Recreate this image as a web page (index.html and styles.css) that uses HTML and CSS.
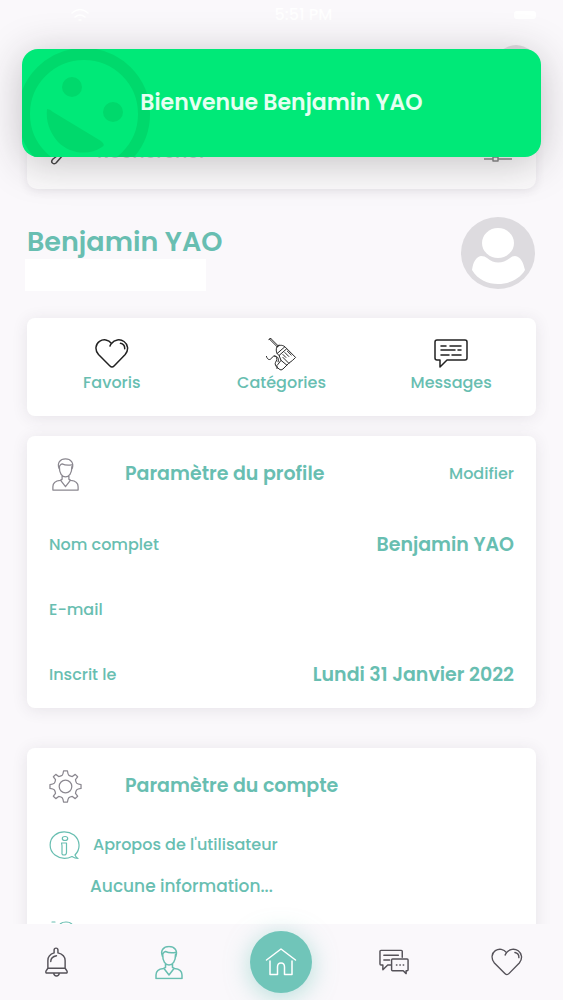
FILE: index.html
```html
<!DOCTYPE html>
<html lang="fr">
<head>
<meta charset="utf-8">
<meta name="viewport" content="width=device-width, initial-scale=1">
<title>Profil</title>
<link rel="stylesheet" href="styles.css">
</head>
<body>
<svg class="defs" aria-hidden="true">
  <symbol id="heart" viewBox="0 0 34 30">
    <path d="M17 28.500c-1 0-1.600-.6-2.300-1.300L3.500 16C-.5 11.500.5 5.500 4.500 2.800 8.500.2 13.500 1 16.500 5c3-4 8.500-4.800 12.500-2 4 2.800 5 8.500 1.200 13L19.300 27.200c-.7.7-1.300 1.300-2.300 1.300zM16.500 5c-.8.8-1.200 1.600-1.500 2.500M25.500 4.800c2.800.6 4.400 2.700 4.200 5.500"/>
  </symbol>
  <symbol id="person" viewBox="0 0 28 34">
    <path d="M7.500 11C5 5 8.500 1 14 1s9 4 6.800 10M7.500 11c-.3-2 1-4.500 3-5 3 1.500 7 1.500 10 1M7.700 9c-.2 7 2.800 10.500 6.300 10.500S20.700 16 20.500 9M10.500 18.500v3.500M17.500 18.500v3.500M10.500 22l-2 1c-5 .5-7.500 2.500-7.500 6.500v3.500h26v-3.500c0-4-2.500-6-7.500-6.500l-2-1M9 23l5 6.500 5-6.500"/>
  </symbol>
</svg>

<div class="app">
  <main class="content">
    <header class="top">
      <div class="status"><svg class="status-wifi" viewBox="0 0 18 14" aria-hidden="true"><path d="M1 5q8-7 16 0M4 9q5-4 10 0M8 12h2"/></svg><span>5:51 PM</span><i class="battery"></i></div>
      <div class="account"><span class="account-dot"></span></div>
      <form class="search">
        <svg class="search-icon" viewBox="0 0 30 26" aria-hidden="true"><circle cx="19" cy="9" r="8"/><path d="M12 14l-8 6c-3 3 0 6 3 4l7-8"/></svg>
        <input type="search" placeholder="Rechercher" aria-label="Rechercher">
        <button type="button" class="filter" aria-label="Filtres">
          <svg viewBox="0 0 28 24" aria-hidden="true"><path d="M0 4h17M22 4h6M17 2h5v4h-5zM0 12h5M10 12h18M5 10h5v4H5zM0 19h9M14 19h14M9 17h5v4H9z"/></svg>
        </button>
      </form>
    </header>

    <section class="identity">
      <div>
        <h1>Benjamin YAO</h1>
        <div class="blank"></div>
      </div>
      <svg class="avatar" viewBox="0 0 75 73" role="img" aria-label="Photo de profil">
        <ellipse class="avatar-bg" cx="37" cy="36" rx="37" ry="36"/>
        <ellipse cx="37" cy="26" rx="16" ry="15"/>
        <path d="M20 39q4 0 6 2q11 9 23 0q2-2 5-2c6 1 8 6 10 14c-6 10-17 14-27 14s-20-4-26-14c1-8 4-13 9-14z"/>
      </svg>
    </section>

    <nav class="card quick" aria-label="Raccourcis">
      <a href="#favoris"><svg class="icon" viewBox="0 0 34 30" aria-hidden="true"><use href="#heart"/></svg>Favoris</a>
      <a href="#categories"><svg class="icon icon-tool" viewBox="0 0 32 34" aria-hidden="true">
        <path d="M4 1l8 8M5.500 .5l7.500 7.500M3.500 1.500L5.500 .5M12 9l2-2M12 9c-1.500 2-1 5 0 7l8-7c-2-1.500-5-2.500-8 0M12 16l2 2 8-7-2-2M22 11l9 9-3 3-4 3-6 6q-2 2-4 0l-2-2q-1-2 1-3l3-4-2-5M18 17l3 3M20 15l4 4M22.500 13.500l4 4M16 23l6 5M18 20l6 6M1 19c1 4 4 4 5.500 1.500s4-2.500 5 0-1.500 4-1.500 6 2 3 2 5M9 18.500c4 0 5 3 4 6"/>
      </svg>Catégories</a>
      <a href="#messages"><svg class="icon" viewBox="0 0 34 30" aria-hidden="true">
        <path d="M3 1.500h28q2 0 2 2v16q0 2-2 2H13l-7 7v-7H3q-2 0-2-2v-16q0-2 2-2zM7 7.500h5M16 7.500h11M7 11.500h14M24 11.500h3M7 16.500h8M18 16.500h9"/>
      </svg>Messages</a>
    </nav>

    <section class="card profile">
      <div class="card-head">
        <svg class="head-icon" viewBox="0 0 28 34" aria-hidden="true"><use href="#person"/></svg>
        <h2>Paramètre du profile</h2>
        <button type="button" class="edit">Modifier</button>
      </div>
      <dl>
        <div><dt>Nom complet</dt><dd>Benjamin YAO</dd></div>
        <div><dt>E-mail</dt><dd></dd></div>
        <div><dt>Inscrit le</dt><dd>Lundi 31 Janvier 2022</dd></div>
      </dl>
    </section>

    <section class="card settings">
      <div class="card-head">
        <svg class="head-icon" viewBox="0 0 34 34" aria-hidden="true">
          <circle cx="17" cy="17" r="6.500"/>
          <path d="M15 1h4q.5 3.500 1.500 4.500 2 1 3.500 1.200L27 4.500 29.500 7 27.300 10q.2 2 1.200 3.500 1 1 4.500 1.500v4q-3.500.5-4.500 1.500-1 1.500-1.200 3.500l2.200 3-2.500 2.500-3-2.200q-1.500.2-3.500 1.200-1 1-1.500 4.500h-4q-.5-3.500-1.500-4.500-2-1-3.500-1.200L7 29.500 4.500 27l2.200-3q-.2-2-1.200-3.500-1-1-4.500-1.500v-4q3.500-.5 4.500-1.500 1-1.500 1.200-3.500L4.500 7 7 4.500l3 2.200q1.500-.2 3.500-1.200 1-1 1.500-4.500z"/>
        </svg>
        <h2>Paramètre du compte</h2>
      </div>
      <div class="about">
        <svg class="about-icon" viewBox="0 0 31 29" aria-hidden="true">
          <path d="M26 24c6-6 5-15-1-20C19-.2 11 0 6 4-.5 9-.5 19 6 24c6 4.500 12 4 17 1.500q3 2 6 2-2-1-3-3.500"/>
          <ellipse cx="16" cy="7.500" rx="2.700" ry="2"/><path d="M12.500 12h5v9.500q0 2.500-2.500 2.500t-2-2.500v-7z"/>
        </svg>
        <h3>Apropos de l'utilisateur</h3>
      </div>
      <p>Aucune information...</p>
      <svg class="about-icon" viewBox="0 0 31 29" aria-hidden="true"><path d="M3 2h3M10 26V8q0-6 7-6t7 6v18z"/></svg>
    </section>
  </main>

  <nav class="tabs" aria-label="Navigation principale">
    <a href="#notifications" aria-label="Notifications"><svg class="bell" viewBox="0 0 24 32" aria-hidden="true"><path d="M3 22V14q0-6 6.500-8V3q0-2 2-2t2 2v3Q21 8 21 14v8l2 3q.5 2-1 2H2q-1.500 0-1-2zM3 22h18M9 27q.5 3 3 3t3-3M6 15q0-5 6-6"/></svg></a>
    <a href="#profil" class="current" aria-label="Profil" aria-current="page"><svg class="user" viewBox="0 0 28 34" aria-hidden="true"><use href="#person"/></svg></a>
    <a href="#accueil" class="home" aria-label="Accueil"><svg viewBox="0 0 32 30" aria-hidden="true"><path d="M1.500 13L16 2l14.500 11M5 14v13.500h7.500V20q0-4 3.500-4t3.500 4v7.500H27V14"/></svg></a>
    <a href="#discussions" aria-label="Discussions"><svg class="chat" viewBox="0 0 32 26" aria-hidden="true"><path d="M24 8V2q0-1-1-1H2Q1 1 1 2v13q0 1 1 1h2v5l5-5h3M5 6h15M5 11h6M14 10h15q1 0 1 1v10q0 1-1 1h-1v3l-3-3H14q-1 0-1-1V11q0-1 1-1zM18 16h.5M21.500 16h.5M25 16h.5"/></svg></a>
    <a href="#favoris" aria-label="Favoris"><svg class="love" viewBox="0 0 34 30" aria-hidden="true"><use href="#heart"/></svg></a>
  </nav>

  <div class="toast" role="status">
    <svg class="smile" viewBox="0 0 130 108" aria-hidden="true">
      <circle class="smile-ring" cx="62" cy="65" r="60"/>
      <circle cx="50" cy="38" r="10"/><circle cx="91" cy="63" r="10"/>
      <path d="M25 60Q28 60 31 63L79 92Q84 96 80 98C67 107 48 105 36 93Q23 78 25 60z"/>
    </svg>
    <span class="toast-text">Bienvenue Benjamin YAO</span>
  </div>
</div>
</body>
</html>
```
FILE: styles.css
```css
* { box-sizing: border-box; }

body {
  margin: 0;
  background: #faf8fb;
  color: #68beb1;
  font: 500 16px/24px Poppins, Inter, "Open Sans", sans-serif;
}

h1, h2, h3, p, dl, dd { margin: 0; }
a { color: inherit; text-decoration: none; }
button { padding: 0; border: 0; background: none; color: inherit; font: inherit; cursor: pointer; }
svg { display: block; fill: none; stroke: currentColor; stroke-width: 1.5; stroke-linecap: round; stroke-linejoin: round; }
.defs { position: absolute; width: 0; height: 0; }

.app { position: relative; display: flex; flex-direction: column; height: 100vh; }
.content { flex: 1; min-height: 0; padding: 0 27px; overflow: auto; scrollbar-width: none; }

.status { display: grid; grid-template-columns: 1fr auto 1fr; align-items: center; height: 30px; padding-left: 44px; color: #fff; }
.status-wifi { width: 18px; height: 14px; }
.battery { justify-self: end; width: 22px; height: 8px; border-radius: 3px; background: #fff; }
.account { display: flex; justify-content: flex-end; height: 85px; padding-top: 15px; }
.account-dot { width: 40px; height: 40px; border-radius: 50%; background: #dddbdf; }

.search { display: flex; align-items: center; height: 74px; padding: 0 24px 0 22px; border-radius: 10px; background: #fbfafb; box-shadow: 0 2px 10px rgba(60, 50, 70, 0.1); }
.search-icon { width: 30px; height: 26px; color: #444; }
.search input { flex: 1; min-width: 0; margin: 0 18px; padding: 0; border: 0; background: none; font: inherit; font-size: 19px; }
.search input::placeholder { color: #d0ced2; }
.filter { color: #888; }
.filter svg { width: 28px; height: 24px; }

.identity { display: flex; justify-content: space-between; padding-top: 28px; }
.identity h1 { padding-top: 7px; font-size: 27px; line-height: 35px; font-weight: 600; }
.blank { width: 181px; height: 32px; margin-left: -2px; background: #fff; }
.avatar { width: 75px; height: 73px; fill: #fff; stroke: none; }
.avatar-bg { fill: #dddbdf; }

.card { border-radius: 8px; background: #fff; box-shadow: 0 2px 16px rgba(60, 50, 70, 0.1); }
.quick { display: grid; grid-template-columns: repeat(3, 1fr); height: 98px; margin-top: 27px; padding-top: 20px; }
.quick a { display: flex; flex-direction: column; align-items: center; gap: 2px; }
.icon { width: 34px; height: 31px; color: #222; }
.icon-tool { height: 33px; margin-bottom: -2px; stroke-width: 1; }

.profile { margin-top: 20px; padding: 14px 22px 1px; }
.card-head { display: grid; grid-template-columns: 76px 1fr auto; align-items: center; height: 48px; }
.head-icon { width: 33px; height: 33px; color: #8b8890; stroke-width: 1.3; }
.card-head h2 { font-size: 19px; line-height: 28px; font-weight: 600; }
.profile dl { padding-top: 14px; }
.profile dl div { display: flex; align-items: center; justify-content: space-between; height: 65px; }
.profile dd { font-size: 19px; font-weight: 600; }

.settings { margin-top: 40px; padding: 14px 22px 22px; }
.about { display: flex; align-items: center; gap: 13px; height: 30px; margin-top: 20px; }
.about-icon { width: 31px; height: 29px; stroke-width: 1.2; }
.about h3 { font-size: 16px; font-weight: 500; }
.settings p { margin: 14px 0 22px 41px; font-size: 17px; }

.tabs { display: grid; grid-template-columns: repeat(5, 1fr); place-items: center; flex: none; height: 76px; background: #faf8fb; color: #555259; }
.bell { width: 23px; height: 31px; }
.user { width: 28px; height: 35px; }
.chat { width: 31px; height: 26px; }
.love { width: 32px; height: 28px; }
.current { color: #68beb1; }
.home { display: grid; place-items: center; width: 62px; height: 62px; border-radius: 50%; background: #70c5b9; color: #fff; box-shadow: 0 4px 24px rgba(112, 197, 185, 0.5); }
.home svg { width: 32px; height: 30px; }

.toast { position: absolute; top: 49px; left: 22px; right: 22px; display: grid; place-items: center; height: 108px; overflow: hidden; border-radius: 16px; background: #00e978; color: #e6fff2; box-shadow: 0 6px 40px rgba(40, 35, 40, 0.26); }
.toast-text { position: relative; font-size: 22px; font-weight: 600; }
.smile { position: absolute; top: 0; left: 0; width: 130px; height: 108px; fill: #00d96c; stroke: none; }
.smile-ring { fill: none; stroke: #00d96c; stroke-width: 12; }
```
